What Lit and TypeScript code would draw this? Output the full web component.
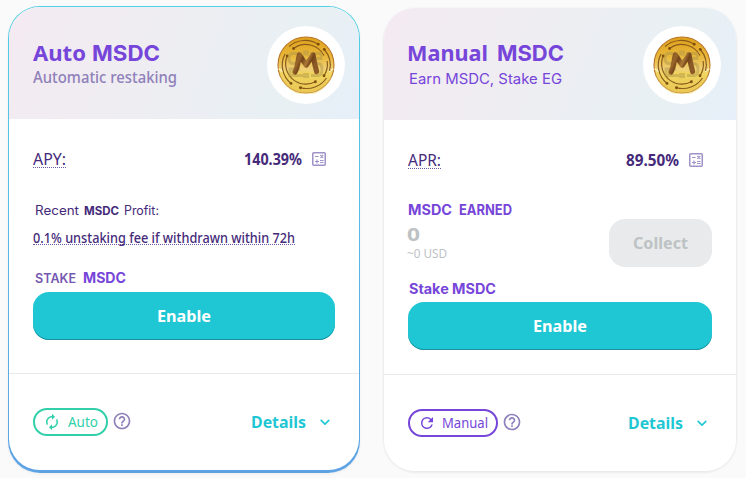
import { LitElement, html, svg, css } from "lit";
import { customElement, property, query } from "lit/decorators.js";

/** A single line of text set to an exact measure. */
@customElement("fit-text")
class FitText extends LitElement {
  @property({ type: Number }) width = 0;
  @query("span") private line!: HTMLSpanElement;

  static styles = css`
    :host { display: block; flex: none; white-space: nowrap; }
    span { display: inline-block; transform-origin: 0 50%; }
  `;

  protected updated() {
    this.style.width = `${this.width}px`;
    const natural = this.line.offsetWidth ? this.line.getBoundingClientRect().width : 0;
    if (natural) this.line.style.transform = `scaleX(${this.width / natural})`;
  }

  render() {
    return html`<span><slot></slot></span>`;
  }
}

const t = (text: string, width: number, cls: string) =>
  html`<fit-text class=${cls} .width=${width}>${text}</fit-text>`;

const calculator = html`<svg class="calc" width="14" height="14" viewBox="0 0 14 14" fill="none" stroke="currentColor">
  <rect x=".75" y=".75" width="12.5" height="12.5" rx="1" stroke-width="1.5" />
  <path d="M3 4.5h3.6M3 9.5h4M5 7.5v4M8 8.5h3.6M8 10.5h3.6M8.4 3l2.8 2.8M11.2 3L8.4 5.8" stroke-width="1.15" />
</svg>`;

const help = html`<svg class="help" width="20" height="20" viewBox="0 0 24 24" fill="currentColor">
  <path d="M11 18h2v-2h-2v2zm1-16C6.48 2 2 6.48 2 12s4.48 10 10 10 10-4.48 10-10S17.52 2 12 2zm0 18c-4.41 0-8-3.59-8-8s3.59-8 8-8 8 3.59 8 8-3.59 8-8 8zm0-14c-2.21 0-4 1.79-4 4h2c0-1.1.9-2 2-2s2 .9 2 2c0 2-3 1.75-3 5h2c0-2.25 3-2.5 3-5 0-2.21-1.79-4-4-4z" />
</svg>`;

const chevron = html`<svg class="chevron" width="20" height="20" viewBox="0 0 24 24" fill="currentColor">
  <path d="M8.12 9.29L12 13.17l3.88-3.88a1 1 0 0 1 1.41 1.41l-4.59 4.59a1 1 0 0 1-1.41 0L6.7 10.7a1 1 0 0 1 0-1.41c.39-.38 1.03-.39 1.42 0z" />
</svg>`;

const autorenew = html`<svg class="mode" width="18" height="18" viewBox="0 0 24 24" fill="currentColor">
  <path d="M12 6v3l4-4-4-4v3c-4.42 0-8 3.58-8 8 0 1.57.46 3.03 1.24 4.26L6.7 14.8c-.45-.83-.7-1.79-.7-2.8 0-3.31 2.69-6 6-6zm6.76 1.74L17.3 9.2c.44.84.7 1.79.7 2.8 0 3.31-2.69 6-6 6v-3l-4 4 4 4v-3c4.42 0 8-3.58 8-8 0-1.57-.46-3.03-1.24-4.26z" />
</svg>`;

const refresh = html`<svg class="mode" width="18" height="18" viewBox="0 0 24 24" fill="currentColor">
  <path d="M17.65 6.35A7.96 7.96 0 0 0 12 4a8 8 0 1 0 7.73 10h-2.08A6 6 0 1 1 12 6c1.66 0 3.14.69 4.22 1.78L13 11h7V4l-2.35 2.35z" />
</svg>`;

const dots = [[16.6, 12.5], [41.2, 8.2], [47.3, 13.5], [10.2, 20], [47, 39.7], [14, 47.4], [23.5, 51.7], [38.4, 45.8]];

const coin = html`<div class="coin"><svg width="58" height="58" viewBox="0 0 58 58" fill="none">
  <defs>
    <linearGradient id="gold" x1="0" y1="0" x2="0" y2="1">
      <stop offset="0" stop-color="#dfa01a" /><stop offset=".35" stop-color="#e8b83c" />
      <stop offset=".58" stop-color="#efd078" /><stop offset=".64" stop-color="#efd35c" /><stop offset="1" stop-color="#e2ba45" />
    </linearGradient>
    <linearGradient id="bronze" x1="0" y1="0" x2="1" y2=".35">
      <stop offset="0" stop-color="#7c4b1e" /><stop offset=".22" stop-color="#9a672b" /><stop offset=".4" stop-color="#754519" />
      <stop offset=".6" stop-color="#ac7a36" /><stop offset=".78" stop-color="#74441a" /><stop offset="1" stop-color="#8c5a26" />
    </linearGradient>
  </defs>
  <circle cx="29" cy="29" r="28" fill="url(#gold)" stroke="#b97425" stroke-width="1.1" />
  <path d="M2 32Q14 38 29 38T56 32A27 27 0 0 1 2 32z" fill="#f3da68" opacity=".4" />
  <path d="M1.6 33q3 1 4 3M56.4 33q-3 1-4 3" stroke="#fff5bd" stroke-width="1.5" />
  <g stroke="#8a5a1c" stroke-width="1.15">
    <path d="M14 47.4A23.8 23.8 0 0 1 8 18" />
    <path d="M12 10.5A24.5 24.5 0 0 1 41.2 8.2" />
    <path d="M16.6 12.5A20.5 20.5 0 0 1 47 19.5" />
    <path d="M50.2 25A21 21 0 0 1 47 39.7" />
    <path d="M10.2 20A20.3 20.3 0 0 0 38.4 45.8" />
    <path d="M47.3 13.5A24 24 0 0 1 52.6 35M49.5 42A24 24 0 0 1 23.5 51.7" />
  </g>
  ${dots.map(([x, y]) => svg`<circle cx=${x} cy=${y} r="1.45" fill="#80500f" />`)}
  <path d="M25 17.5H16q-4 0-4 5t4 5h8M23 33H13v6.5h13M33 17.5h11v5h-6v5h3q4 0 4 6t-4 6h-7M27.5 14.5v5M30.5 14.5v5M27.5 37v5M30.5 37v5" stroke="#b09547" stroke-width="2.8" opacity=".5" />
  <path d="M18 36C21 30.5 20.8 25 22.4 19L29.2 29 36 19Q37.6 28 39.6 35.5" stroke="url(#bronze)" stroke-width="5.2" stroke-linecap="round" stroke-linejoin="round" />
</svg></div>`;

@customElement("app-root")
class AppRoot extends LitElement {
  static styles = css`
    :host {
      display: flex; align-items: flex-start; gap: 24px; box-sizing: border-box;
      width: 746px; height: 478px; padding: 6px 10px 0 8px; overflow: hidden;
      background: #fafafa; color: #452a7a; line-height: 20px;
      font-family: "Noto Sans", sans-serif; font-size: 16px;
    }
    .frame { box-sizing: border-box; width: 352px; border-radius: 32px; flex: none; }
    .frame.auto { height: 467px; padding: 1px 1px 3px; background: linear-gradient(180deg, #50d0e5, #5ea2e4); box-shadow: 0 1px 3px #0000000d; }
    .frame.manual { height: 463px; margin-top: 2px; box-shadow: 0 1px 2px 1px #0000000f, 0 0 1px #00000014; }
    .card { display: flex; flex-direction: column; height: 100%; border-radius: 31px; overflow: hidden; background: #fff; }
    header { display: flex; justify-content: space-between; box-sizing: border-box; height: 112px; flex: none;
      padding: 31px 14px 0 24px; background: linear-gradient(112deg, #f4eaf2 0%, #efedf2 35%, #eaeff3 65%, #e8f0f4 82%, #e6eff9 100%); }
    .manual header { padding: 30px 15px 0 23px; }
    .coin { display: grid; place-items: center; width: 78px; height: 78px; margin-top: -12px; border-radius: 50%; background: #fff; flex: none; }
    .row { display: flex; align-items: flex-start; }
    .title { gap: 6px; }
    .manual .title { gap: 9px; }
    .h { font-weight: 700; font-size: 22px; line-height: 28px; color: #7645d9; }
    .h.geo { position: relative; top: 1px; }
    .geo { font-family: Inter, sans-serif; }
    .sub { font-size: 16px; font-weight: 500; color: #8f80ba; margin-top: 1px; }
    .sub.geo { font-size: 14.5px; font-weight: 400; color: #7645d9; margin: 3px 0 0 2px; }
    .body { box-sizing: border-box; padding: 30px 24px 0; height: 254px; flex: none; }
    .rate { margin-bottom: 32px; }
    .manual .rate { margin-bottom: 30px; }
    .dotted { border-bottom: 1px dotted #6e58a8; height: 18px; }
    .fee { font-size: 14px; font-weight: 500; height: 16px; margin-top: 7px; }
    .num { font-weight: 700; margin-left: auto; }
    .calc { margin: 3px 9px 0 10px; color: #a092c9; flex: none; }
    .small { font-size: 12.5px; }
    .b { font-weight: 700; font-size: 11.5px; }
    .recent { gap: 5px; padding-left: 2px; }
    .stake { gap: 7px; padding-left: 2px; margin-top: 23px; }
    .key { font-weight: 600; font-size: 12.5px; color: #7559b0; padding-top: 1px; height: 19px; }
    .brand { font-weight: 700; font-size: 14px; color: #7645d9; }
    .button { display: flex; justify-content: center; box-sizing: border-box; height: 48px; padding-top: 14px;
      border-radius: 16px; background: #1fc7d4; color: #fff; font-weight: 700; box-shadow: inset 0 -1px 0 #188f9b; }
    .auto .button { margin-top: 4px; }
    .earn { display: flex; justify-content: space-between; height: 67px; }
    .earnline { gap: 7px; }
    .zero { font-weight: 700; font-size: 18px; line-height: 19px; color: #bdc2c4; margin: 5px 0 0 -1px; }
    .usd { font-size: 12px; color: #bdc2c4; margin: 0 0 0 -1px; }
    .collect { width: 103px; height: 48px; margin-top: 19px; background: #e9eaeb; color: #bdc2c4; box-shadow: none; }
    .stake2 { margin: 12px 0 3px 1px; }
    footer { display: flex; align-items: flex-start; flex: 1; border-top: 1px solid #e9e9eb; padding: 34px 24px 0; }
    .pill { display: flex; box-sizing: border-box; height: 28px; border: 2px solid #31d0aa; border-radius: 14px; color: #31d0aa; padding: 2px 8px 0; font-size: 14px; }
    .manual .pill { border-color: #7645d9; color: #7645d9; }
    .mode { margin: 1px 7px 0 0; flex: none; }
    .manual .mode { margin-right: 6px; }
    .help { margin: 3px 0 0 4px; color: #8f80ba; }
    .details { margin-left: auto; margin-top: 4px; font-weight: 700; color: #1fc7d4; }
    .chevron { margin: 4px 0 0 9px; color: #1fc7d4; }
  `;

  render() {
    return html`
      <section class="frame auto"><div class="card">
        <header>
          <div>
            <div class="row title">${t("Auto", 53, "h")}${t("MSDC", 68, "h geo")}</div>
            ${t("Automatic restaking", 144, "sub")}
          </div>
          ${coin}
        </header>
        <div class="body">
          <div class="row rate">${t("APY:", 33, "dotted")}${t("140.39%", 58, "num")}${calculator}</div>
          <div class="row recent">${t("Recent", 44, "geo small")}${t("MSDC", 35, "geo b")}${t("Profit:", 35, "geo small")}</div>
          ${t("0.1% unstaking fee if withdrawn within 72h", 262, "dotted fee")}
          <div class="row stake">${t("STAKE", 41, "geo key")}${t("MSDC", 43, "geo brand")}</div>
          <div class="button">${t("Enable", 54, "")}</div>
        </div>
        <footer>
          <div class="pill">${autorenew}${t("Auto", 30, "")}</div>${help}
          ${t("Details", 55, "details")}${chevron}
        </footer>
      </div></section>

      <section class="frame manual"><div class="card">
        <header>
          <div>
            <div class="row title">${t("Manual", 81, "h")}${t("MSDC", 67, "h geo")}</div>
            ${t("Earn MSDC, Stake EG", 153, "sub geo")}
          </div>
          ${coin}
        </header>
        <div class="body">
          <div class="row rate">${t("APR:", 33, "dotted")}${t("89.50%", 53, "num")}${calculator}</div>
          <div class="earn">
            <div>
              <div class="row earnline">${t("MSDC", 44, "geo brand")}${t("EARNED", 53, "geo brand")}</div>
              ${t("0", 13, "zero")}${t("~0 USD", 40, "usd")}
            </div>
            <div class="button collect">${t("Collect", 55, "")}</div>
          </div>
          ${t("Stake MSDC", 87, "geo brand stake2")}
          <div class="button">${t("Enable", 54, "")}</div>
        </div>
        <footer>
          <div class="pill">${refresh}${t("Manual", 46, "")}</div>${help}
          ${t("Details", 55, "details")}${chevron}
        </footer>
      </div></section>`;
  }
}
